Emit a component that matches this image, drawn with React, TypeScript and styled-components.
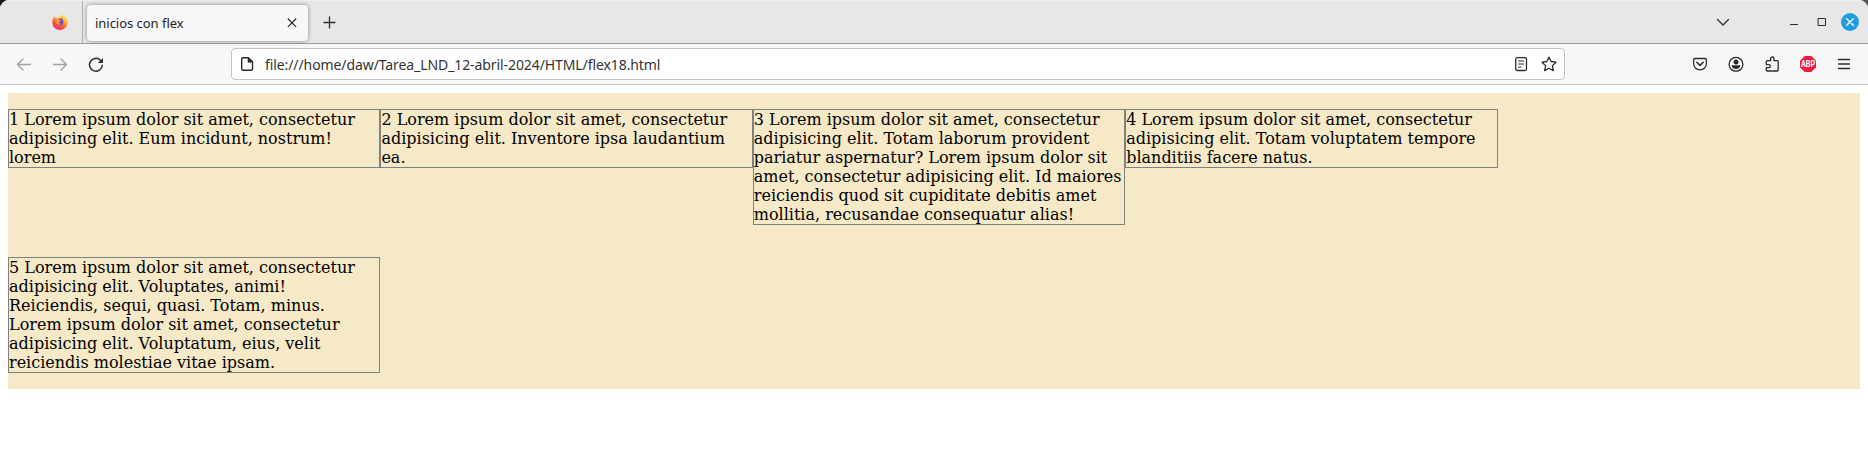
import React from "react";
import styled, { createGlobalStyle, css } from "styled-components";

const GlobalStyle = createGlobalStyle`
  body { margin: 0; background: #fff; }
`;

const Backdrop = styled.div`
  height: 455px;
  overflow: hidden;
  background: linear-gradient(90deg, #1c1216 50%, #55555a 50%);
`;

const Window = styled.div`
  height: 455px;
  background: #fff;
  border-radius: 9px 9px 0 0;
  overflow: hidden;
  font-family: "Noto Sans", sans-serif;
`;

const TabStrip = styled.div`
  box-sizing: border-box;
  display: flex;
  align-items: center;
  height: 44px;
  background: #e7e7e7;
  border-top: 1px solid #eeeeee;
  border-bottom: 1px solid #a0a0a0;
`;

const PinnedTab = styled.div`
  box-sizing: border-box;
  align-self: stretch;
  width: 83px;
  padding: 12px 0 0 51px;
  border-right: 1px solid #b1b1b1;
`;

const Tab = styled.div`
  box-sizing: border-box;
  display: flex;
  align-items: center;
  justify-content: space-between;
  width: 221px;
  height: 36px;
  margin: 1px 13px 0 4px;
  padding: 0 8px;
  border-radius: 4px;
  background: #f7f7f7;
  box-shadow: 0 0 4px rgba(0, 0, 0, 0.42);
`;

const TabTitle = styled.span`
  font-size: 13px;
  line-height: 18px;
  letter-spacing: -0.03px;
  color: #1e1e1e;
  white-space: nowrap;
`;

const WindowControls = styled.div`
  display: flex;
  align-items: center;
  margin-left: auto;
  padding-right: 8px;
`;

const ControlCell = styled.span<{ $gap?: number }>`
  display: flex;
  width: 20px;
  height: 20px;
  margin: 0 ${(p) => p.$gap ?? 8}px 0 0;
  align-items: center;
  justify-content: center;
`;

const Toolbar = styled.div`
  box-sizing: border-box;
  display: flex;
  align-items: center;
  height: 41px;
  padding: 0 6px;
  background: #f7f7f7;
  border-bottom: 1px solid #c6c6c6;
`;

const ToolButton = styled.span<{ $disabled?: boolean }>`
  display: flex;
  align-items: center;
  justify-content: center;
  width: 36px;
  height: 32px;
  ${(p) =>
    p.$disabled &&
    css`
      opacity: 0.42;
    `}
`;

const AddressBar = styled.div`
  box-sizing: border-box;
  display: flex;
  align-items: center;
  width: 1334px;
  height: 32px;
  margin: 0 auto 0 117px;
  padding: 0 7px;
  border: 1px solid #c2c2c2;
  border-radius: 4px;
  background: #fff;
`;

const Address = styled.span`
  margin: 0 auto 0 10px;
  padding-top: 2px;
  font-size: 14px;
  line-height: 20px;
  letter-spacing: -0.09px;
  color: #333;
  white-space: nowrap;
`;

const AddressAction = styled.span`
  display: flex;
  margin-left: 12px;
`;

const Page = styled.main`
  padding: 8px;
`;

const Container = styled.div`
  display: flex;
  flex-wrap: wrap;
  align-items: flex-start;
  background: #f6e9c7;
`;

const Paragraph = styled.p`
  width: 20%;
  margin: 16px 0;
  border: 1px solid gray;
  font: 16px/19px "DejaVu Serif", serif;
  color: #000;
`;

const Svg = styled.svg`
  display: block;
  flex: none;
  fill: none;
  stroke: #2b2b2b;
  stroke-width: 1.3;
  stroke-linecap: round;
  stroke-linejoin: round;
`;

type IconProps = { children: React.ReactNode; size?: number };
const Icon = ({ children, size = 16 }: IconProps) => (
  <Svg width={size} height={size} viewBox={`0 0 ${size} ${size}`}>
    {children}
  </Svg>
);

const FirefoxLogo = () => (
  <Svg width="18" height="18" viewBox="0 0 18 18">
    <defs>
      <linearGradient id="flame" x1="0.8" y1="0.05" x2="0.25" y2="1">
        <stop offset="0" stopColor="#fff044" />
        <stop offset="0.35" stopColor="#ffb02e" />
        <stop offset="0.65" stopColor="#ff5a36" />
        <stop offset="1" stopColor="#ed1f85" />
      </linearGradient>
    </defs>
    <g stroke="none">
      <path
        fill="url(#flame)"
        d="M10.5 1C12 2 12.4 3.1 13.5 4.2c.6-.4.5-.9.5-1.3 2 1.800 3 4.300 2.700 7A7.700 7.700 0 0 1 9 17 7.600 7.600 0 0 1 1.300 9.700C1.100 7 2 4.900 3.500 3.200c.1.700.3 1.200.8 1.600 1.200-.2 2.200 0 3 .5C8.800 4.500 10.300 3.300 10.500 1Z"
      />
      <circle cx="9" cy="9" r="3.400" fill="#7542e5" />
      <path fill="#ff9a2f" d="M4.600 6.300c1.600-1 3.500-.5 4.200.6l1.400.3c-.3 1-1.500 1.100-2 1.700-.2 1.400.7 1.900 2 1.700-1 1.900-3.800 1.500-4.800-.6Z" />
    </g>
  </Svg>
);

const paragraphs = [
  "1 Lorem ipsum dolor sit amet, consectetur adipisicing elit. Eum incidunt, nostrum! lorem",
  "2 Lorem ipsum dolor sit amet, consectetur adipisicing elit. Inventore ipsa laudantium ea.",
  "3 Lorem ipsum dolor sit amet, consectetur adipisicing elit. Totam laborum provident pariatur aspernatur? Lorem ipsum dolor sit amet, consectetur adipisicing elit. Id maiores reiciendis quod sit cupiditate debitis amet mollitia, recusandae consequatur alias!",
  "4 Lorem ipsum dolor sit amet, consectetur adipisicing elit. Totam voluptatem tempore blanditiis facere natus.",
  "5 Lorem ipsum dolor sit amet, consectetur adipisicing elit. Voluptates, animi! Reiciendis, sequi, quasi. Totam, minus. Lorem ipsum dolor sit amet, consectetur adipisicing elit. Voluptatum, eius, velit reiciendis molestiae vitae ipsam.",
];

export default function App() {
  return (
    <Backdrop>
      <GlobalStyle />
      <Window>
        <TabStrip>
          <PinnedTab>
            <FirefoxLogo />
          </PinnedTab>
          <Tab>
            <TabTitle>inicios con flex</TabTitle>
            <Icon>
              <path d="M4.200 4l7.600 7.600M11.800 4l-7.600 7.600" strokeWidth="1.200" />
            </Icon>
          </Tab>
          <Icon>
            <path d="M8.500 3v11M3 8.500h11" />
          </Icon>
          <WindowControls>
            <ControlCell $gap={51}>
              <Icon>
                <path d="M2.500 5.500L8 11l5.500-5.500" />
              </Icon>
            </ControlCell>
            <ControlCell>
              <Icon>
                <path d="M4 10.500h8" strokeWidth="1" strokeLinecap="butt" />
              </Icon>
            </ControlCell>
            <ControlCell>
              <Icon>
                <path d="M4.500 4.500h7v7h-7z" strokeWidth="1" strokeLinejoin="miter" />
              </Icon>
            </ControlCell>
            <ControlCell $gap={0}>
              <Icon size={18}>
                <circle cx="9" cy="9" r="9" fill="#1f9ede" stroke="none" />
                <path d="M5.700 5.700l6.600 6.600M12.300 5.700l-6.600 6.600" stroke="#fff" strokeWidth="1.400" />
              </Icon>
            </ControlCell>
          </WindowControls>
        </TabStrip>

        <Toolbar>
          <ToolButton $disabled>
            <Icon>
              <path d="M14.500 8.500h-13M7 3L1.500 8.500 7 14" />
            </Icon>
          </ToolButton>
          <ToolButton $disabled>
            <Icon>
              <path d="M1.500 8.500h13M9 3l5.500 5.500L9 14" />
            </Icon>
          </ToolButton>
          <ToolButton>
            <Icon>
              <path d="M14.300 9.300A6.400 6.400 0 1 1 12.400 4.200" strokeWidth="1.500" />
              <path d="M15 2v5H10z" fill="#2b2b2b" stroke="none" />
            </Icon>
          </ToolButton>
          <AddressBar>
            <Icon>
              <path d="M4 1.700h5.500l4 4V13a1.300 1.300 0 0 1-1.300 1.300H4A1.300 1.300 0 0 1 2.700 13V3A1.300 1.300 0 0 1 4 1.700Z" strokeWidth="1.400" />
              <path d="M9 1.700v4.500h4.500L9.500 1.700Z" fill="#2b2b2b" strokeWidth=".6" />
            </Icon>
            <Address>file:///home/daw/Tarea_LND_12-abril-2024/HTML/flex18.html</Address>
            <AddressAction>
              <Icon>
                <rect x="2.700" y="1.700" width="10.800" height="12.800" rx="1.500" />
                <path d="M5.500 5h5M5.500 8h5M5.500 11h2.500" strokeWidth="1.100" />
              </Icon>
            </AddressAction>
            <AddressAction>
              <Icon>
                <path d="M8 1.100l2.100 4.400 4.900.7-3.600 3.400.9 5L8 12.300l-4.300 2.300.9-5L1 6.200l4.900-.7Z" />
              </Icon>
            </AddressAction>
          </AddressBar>
          <ToolButton>
            <Icon>
              <path d="M3 2.500h10A1.400 1.400 0 0 1 14.400 4v3.500a6.400 6.400 0 0 1-12.800 0V4A1.400 1.400 0 0 1 3 2.500Z" />
              <path d="M4.800 6.300L8 9.400l3.200-3.100" strokeWidth="1.500" />
            </Icon>
          </ToolButton>
          <ToolButton>
            <Icon>
              <circle cx="8" cy="8.300" r="6.900" />
              <circle cx="8" cy="5.900" r="2.500" fill="#2b2b2b" stroke="none" />
              <path d="M3.700 9.200h8.600c0 2.200-1.800 3.700-4.300 3.700s-4.300-1.500-4.300-3.700Z" fill="#2b2b2b" stroke="none" />
            </Icon>
          </ToolButton>
          <ToolButton>
            <Icon>
              <path d="M6.600 4.700V2.700a1.700 1.700 0 0 1 3.400 0v2h3.200a1 1 0 0 1 1 1V14a1 1 0 0 1-1 1H3.300a1 1 0 0 1-1-1v-2.300h2.500a1.500 1.500 0 0 0 0-3H2.300V5.700a1 1 0 0 1 1-1Z" />
            </Icon>
          </ToolButton>
          <ToolButton>
            <Icon>
              <path d="M4.700 0h6.600L16 4.700v6.600L11.300 16H4.700L0 11.300V4.700Z" fill="#ee1c40" stroke="none" />
              <text
                x="8"
                y="11"
                textAnchor="middle"
                fill="#fff"
                stroke="none"
                fontFamily="Roboto, sans-serif"
                fontWeight="700"
                fontSize="8.200"
                textLength="14.200"
                lengthAdjust="spacingAndGlyphs"
              >
                ABP
              </text>
            </Icon>
          </ToolButton>
          <ToolButton>
            <Icon>
              <path d="M2.500 3.500h11M2.500 8h11M2.500 12.500h11" />
            </Icon>
          </ToolButton>
        </Toolbar>

        <Page>
          <Container>
            {paragraphs.map((text) => (
              <Paragraph key={text}>{text}</Paragraph>
            ))}
          </Container>
        </Page>
      </Window>
    </Backdrop>
  );
}
